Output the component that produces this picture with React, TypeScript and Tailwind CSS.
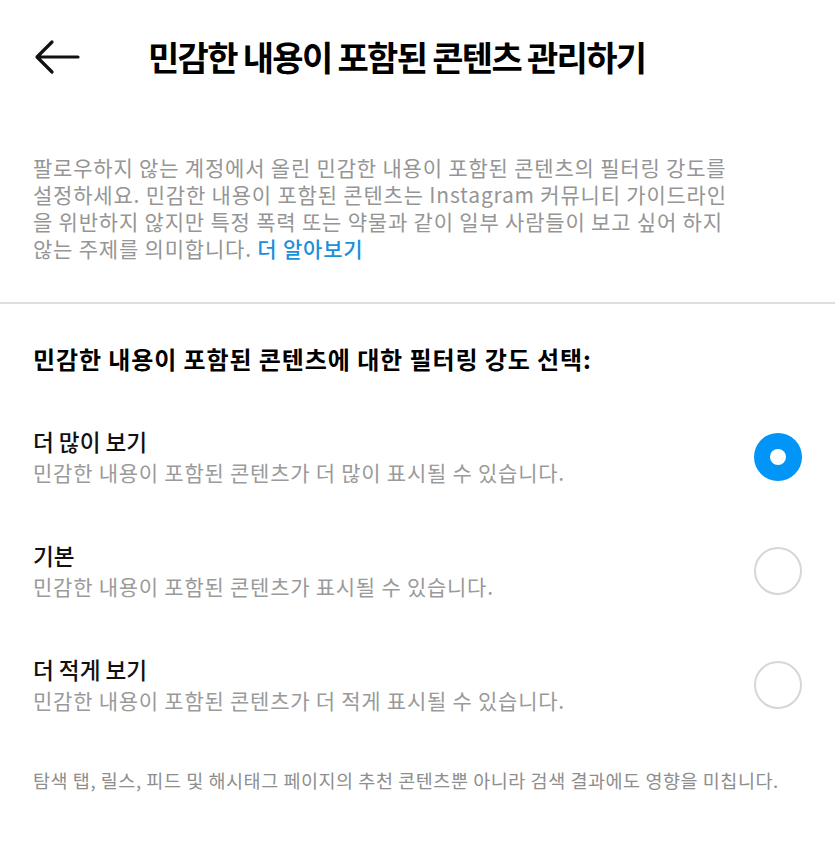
import { useState } from "react";

const options = [
  { title: "더 많이 보기", desc: "민감한 내용이 포함된 콘텐츠가 더 많이 표시될 수 있습니다." },
  { title: "기본", desc: "민감한 내용이 포함된 콘텐츠가 표시될 수 있습니다." },
  { title: "더 적게 보기", desc: "민감한 내용이 포함된 콘텐츠가 더 적게 표시될 수 있습니다." },
];

export default function App() {
  const [selected, setSelected] = useState(0);

  return (
    <div
      className="w-[835px] min-h-[864px] bg-white text-black"
      style={{ fontFamily: '"Noto Sans CJK KR", "Noto Sans", sans-serif' }}
    >
      {/* header */}
      <div className="flex items-center h-[114px]">
        <button className="ml-[33px] w-[48px] h-[48px] flex items-center justify-center">
          <svg width="46" height="36" viewBox="0 0 46 36" fill="none">
            <path
              d="M44 18H4M18 3L3 18l15 15"
              stroke="#111"
              strokeWidth="3.2"
              strokeLinecap="round"
              strokeLinejoin="round"
            />
          </svg>
        </button>
        <div className="ml-[67px] text-[34px] font-bold leading-none tracking-[-1.7px]">
          민감한 내용이 포함된 콘텐츠 관리하기
        </div>
      </div>

      {/* description */}
      <div className="pt-[40px] pb-[40px] px-[33px] text-[21px] leading-[27px] tracking-[0.8px] text-[#959595] whitespace-nowrap">
        <p>팔로우하지 않는 계정에서 올린 민감한 내용이 포함된 콘텐츠의 필터링 강도를</p>
        <p>설정하세요. 민감한 내용이 포함된 콘텐츠는 Instagram 커뮤니티 가이드라인</p>
        <p>을 위반하지 않지만 특정 폭력 또는 약물과 같이 일부 사람들이 보고 싶어 하지</p>
        <p>
          않는 주제를 의미합니다. <span className="text-[#1a8fdc] font-medium">더 알아보기</span>
        </p>
      </div>

      <div className="h-[2px] bg-[#dedede]" />

      {/* heading */}
      <div className="pt-[40px] px-[33px] text-[24px] leading-[30px] font-bold tracking-[0.9px] whitespace-nowrap">
        민감한 내용이 포함된 콘텐츠에 대한 필터링 강도 선택:
      </div>

      {/* options */}
      <div className="mt-[53px] flex flex-col gap-[54px]">
        {options.map((o, i) => (
          <div
            key={o.title}
            className="flex items-center justify-between pl-[33px] pr-[33px] cursor-pointer"
            onClick={() => setSelected(i)}
          >
            <div className="flex flex-col">
              <div className="text-[22.6px] leading-[30px] font-medium text-[#111]">{o.title}</div>
              <div className="text-[21px] leading-[30px] tracking-[0.75px] text-[#9a9a9a]">{o.desc}</div>
            </div>
            {selected === i ? (
              <div className="w-[48px] h-[48px] rounded-full bg-[#0095f6] flex items-center justify-center">
                <div className="w-[16px] h-[16px] rounded-full bg-white" />
              </div>
            ) : (
              <div className="w-[48px] h-[48px] rounded-full border-2 border-[#d6d6d6]" />
            )}
          </div>
        ))}
      </div>

      {/* footer note */}
      <div className="mt-[53px] px-[33px] text-[18.5px] leading-[24px] tracking-[0.55px] text-[#8e8e8e] whitespace-nowrap">
        탐색 탭, 릴스, 피드 및 해시태그 페이지의 추천 콘텐츠뿐 아니라 검색 결과에도 영향을 미칩니다.
      </div>
    </div>
  );
}
